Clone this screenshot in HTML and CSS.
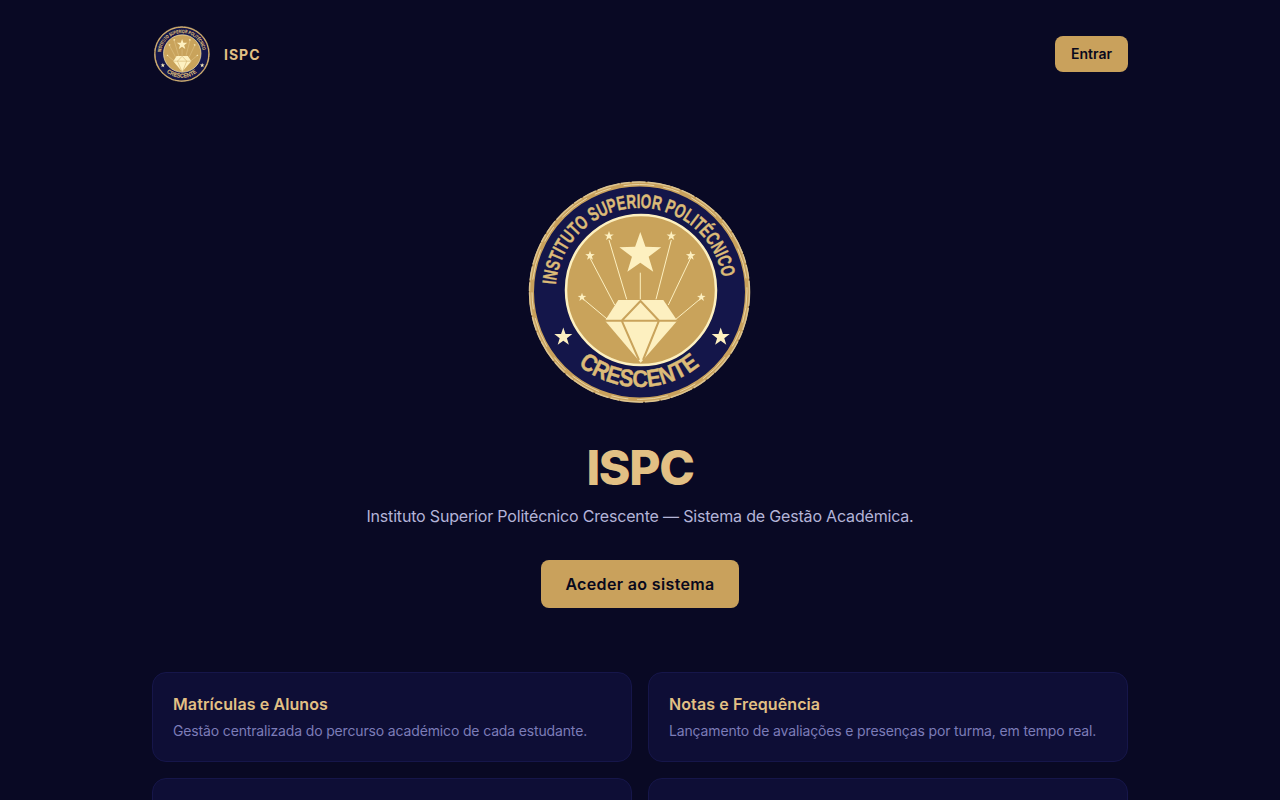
FILE: index.html
```html
<!DOCTYPE html>
<html lang="pt">
<head>
    <meta charset="utf-8" />
    <title>ISPC</title>
    <link rel="stylesheet" href="styles.css">
</head>
<body>
    <svg class="defs" width="0" height="0" aria-hidden="true">
        <defs>
            <path id="star" d="M0 -1 L.235 -.324 L.951 -.309 L.38 .124 L.588 .809 L0 .4 L-.588 .809 L-.38 .124 L-.951 -.309 L-.235 -.324 Z" />
            <path id="arc-top" d="M28.8 126.6 A84 84 0 1 1 194.2 126.6" />
            <path id="arc-bottom" d="M29.2 159.5 A95 95 0 0 0 193.8 159.5" />
            <symbol id="seal" viewBox="0 0 224 224">
                <circle class="s-navy" cx="111.5" cy="112" r="109" />
                <circle class="s-rim" cx="111.5" cy="112" r="108" />
                <circle class="s-rim-rough" cx="111.5" cy="112" r="110" />
                <circle class="s-rim-inner" cx="111.5" cy="112" r="107.5" />
                <circle class="s-gold" cx="113" cy="110" r="75" />
                <text class="s-arc-top"><textPath href="#arc-top" startOffset="22" textLength="242" lengthAdjust="spacingAndGlyphs">INSTITUTO SUPERIOR POLITÉCNICO</textPath></text>
                <text class="s-arc-bottom"><textPath href="#arc-bottom" startOffset="33" textLength="132" lengthAdjust="spacingAndGlyphs">CRESCENTE</textPath></text>
                <g class="s-rays">
                    <path d="M112.3 92.7V119.3M81 60L98.7 119.3M143.3 60L128 119.3M62 78L86.7 125M162.7 78L140.3 125M54 118L80.3 140M173.3 118L147 140" />
                </g>
                <g class="s-stars">
                    <use href="#star" transform="translate(112.3 74) scale(22)" />
                    <use href="#star" transform="translate(81 56) scale(5)" />
                    <use href="#star" transform="translate(143.3 56) scale(5)" />
                    <use href="#star" transform="translate(62 75.7) scale(5)" />
                    <use href="#star" transform="translate(162.7 75.7) scale(5)" />
                    <use href="#star" transform="translate(54 117.3) scale(4.5)" />
                    <use href="#star" transform="translate(173.3 117.3) scale(4.5)" />
                    <use href="#star" transform="translate(35.3 157) scale(9.5)" />
                    <use href="#star" transform="translate(192.7 157) scale(9.5)" />
                    <path d="M90.3 120H135.3L149.3 140.7L112.7 182.7L77 140.7Z" />
                </g>
                <g class="s-cuts">
                    <path d="M77 140.7H149.3M93.7 140.7L112.5 121L131 140.7M93.7 140.7L111 180M131 140.7L115 180" />
                </g>
            </symbol>
        </defs>
    </svg>

    <div class="page">
        <header class="topbar">
            <a class="brand" href="#">
                <svg class="brand-seal"><use href="#seal" /></svg>
                <span class="brand-name">ISPC</span>
            </a>
            <a class="btn btn-small" href="#">Entrar</a>
        </header>

        <section class="hero">
            <svg class="hero-seal"><use href="#seal" /></svg>
            <h1>ISPC</h1>
            <p class="lead">Instituto Superior Politécnico Crescente — Sistema de Gestão Académica.</p>
            <a class="btn btn-large" href="#">Aceder ao sistema</a>
        </section>

        <section class="cards">
            <div class="card">
                <h3>Matrículas e Alunos</h3>
                <p>Gestão centralizada do percurso académico de cada estudante.</p>
            </div>
            <div class="card">
                <h3>Notas e Frequência</h3>
                <p>Lançamento de avaliações e presenças por turma, em tempo real.</p>
            </div>
            <div class="card card-empty"></div>
            <div class="card card-empty"></div>
        </section>
    </div>
</body>
</html>
```

FILE: styles.css
```css
* {
    margin: 0;
    padding: 0;
    box-sizing: border-box;
}

html {
    font-family: Inter, "Liberation Sans", sans-serif;
}

body {
    background: #090924;
    color: #b4b4d8;
}

a {
    text-decoration: none;
    color: inherit;
}

.defs {
    position: absolute;
}

.page {
    width: 976px;
    margin: 0 auto;
}

.topbar {
    display: flex;
    align-items: center;
    justify-content: space-between;
    padding: 24px 0 0;
}

.brand {
    display: flex;
    align-items: center;
    gap: 12px;
}

.brand-seal {
    display: block;
    width: 56px;
    height: 56px;
    margin: 2px;
}

.brand-name {
    font-size: 14px;
    font-weight: 700;
    letter-spacing: 1px;
    color: #e2c084;
}

.btn {
    display: inline-block;
    background: #c9a15c;
    color: #08081c;
    font-weight: 600;
}

.btn-small {
    padding: 10px 16px;
    font-size: 14px;
    line-height: 16px;
    border-radius: 8px;
}

.btn-large {
    padding: 14px 24px;
    font-size: 16px;
    line-height: 20px;
    letter-spacing: .35px;
    border-radius: 8px;
}

.hero {
    display: flex;
    flex-direction: column;
    align-items: center;
    padding-top: 96px;
}

.hero-seal {
    display: block;
    width: 224px;
    height: 224px;
}

.hero h1 {
    margin-top: 34px;
    font-size: 48px;
    line-height: 60px;
    font-weight: 800;
    letter-spacing: -1.3px;
    color: #e2c084;
}

.lead {
    margin-top: 6px;
    margin-bottom: 32px;
    font-size: 16px;
    line-height: 24px;
    letter-spacing: -.18px;
}

.cards {
    display: grid;
    grid-template-columns: 1fr 1fr;
    gap: 16px;
    margin-top: 64px;
}

.card {
    padding: 19px 20px;
    min-height: 90px;
    background: #0e0e36;
    border: 1px solid #16164a;
    border-radius: 14px;
}

.card h3 {
    font-size: 16px;
    line-height: 24px;
    font-weight: 600;
    letter-spacing: .1px;
    color: #e2c084;
}

.card p {
    margin-top: 5px;
    font-size: 14px;
    line-height: 20px;
    letter-spacing: -.15px;
    color: #7c7cb8;
}

/* seal */
.s-navy {
    fill: #14164a;
}

.s-rim {
    fill: none;
    stroke: #c9a15c;
    stroke-width: 5;
}

.s-rim-rough {
    fill: none;
    stroke: #dcc491;
    stroke-width: 1.5;
    stroke-dasharray: 14 2 23 1 9 2;
}

.s-rim-inner {
    fill: none;
    stroke: #e8d4a4;
    stroke-width: 1;
    stroke-dasharray: 31 9 17 13;
}

.s-gold {
    fill: #c9a35b;
    stroke: #fdf0c0;
    stroke-width: 2.5;
}

.s-arc-top,
.s-arc-bottom {
    font-family: "Liberation Sans", sans-serif;
    font-weight: 700;
    fill: #dcbb78;
    stroke: #dcbb78;
    stroke-width: .4;
}

.s-arc-top {
    font-size: 19.5px;
}

.s-arc-bottom {
    font-size: 24px;
}

.s-rays {
    fill: none;
    stroke: #fdf0c0;
    stroke-width: 1;
}

.s-stars {
    fill: #fdf0c0;
}

.s-cuts {
    fill: none;
    stroke: #c9a35b;
    stroke-width: 2;
}
```
